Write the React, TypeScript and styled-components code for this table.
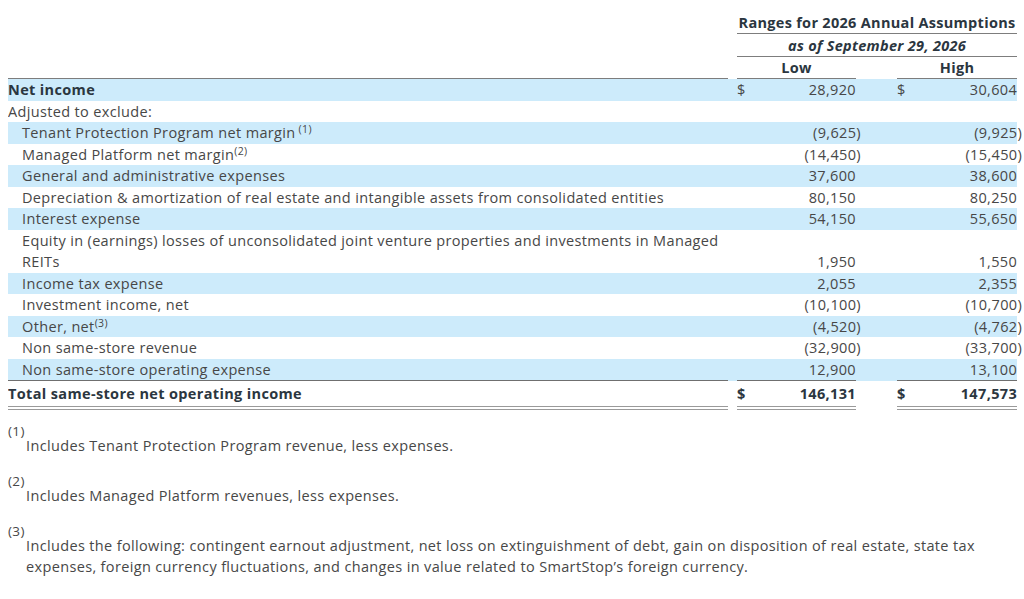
import React from "react";
import styled, { createGlobalStyle } from "styled-components";

const GlobalStyle = createGlobalStyle`
  body {
    margin: 8px 0 8px 8px;
    background: #fff;
    font-family: "Open Sans", "Liberation Sans", sans-serif;
    color: #474747;
  }
`;

const Table = styled.table`
  width: 1009px;
  margin-top: 3px;
  table-layout: fixed;
  border-collapse: collapse;
  font-size: 14.5px;
  letter-spacing: 0.35px;
`;

const HeadCell = styled.th<{ $line?: boolean; $italic?: boolean; $h?: number }>`
  padding: 0;
  height: ${(p) => p.$h ?? 22}px;
  font-weight: 700;
  font-style: ${(p) => (p.$italic ? "italic" : "normal")};
  text-align: center;
  color: #2b3640;
  font-size: 14.5px;
  letter-spacing: 0.3px;
  border-bottom: ${(p) => (p.$line ? "1.5px solid #7d7d7d" : "none")};
`;

const Row = styled.tr<{ $shade?: boolean }>`
  background: ${(p) => (p.$shade ? "#cdebfb" : "transparent")};
`;

const Label = styled.td<{ $indent?: boolean; $bold?: boolean }>`
  padding: 0 0 0 ${(p) => (p.$indent ? "14px" : "0")};
  line-height: 21.5px;
  font-weight: ${(p) => (p.$bold ? 700 : 400)};
  color: ${(p) => (p.$bold ? "#2b3640" : "#474747")};
  white-space: nowrap;
`;

const Cell = styled.td<{ $bold?: boolean; $right?: boolean }>`
  padding: 0;
  line-height: 21.5px;
  vertical-align: bottom;
  text-align: ${(p) => (p.$right ? "right" : "left")};
  font-weight: ${(p) => (p.$bold ? 700 : 400)};
  color: ${(p) => (p.$bold ? "#2b3640" : "#474747")};
`;

const TotalRow = styled.tr`
  td {
    height: 24px;
    padding-top: 1px;
    line-height: 24px;
    vertical-align: middle;
  }
  td.ruled {
    border-top: 1.5px solid #6f6f6f;
    border-bottom: 4px double #9a9a9a;
  }
`;

const Paren = styled.span`
  margin-right: -5px;
`;

const Sup = styled.sup<{ $space?: boolean }>`
  font-size: 10.5px;
  line-height: 0;
  vertical-align: 5px;
  margin-left: ${(p) => (p.$space ? "3px" : "0")};
`;

const Notes = styled.div`
  margin-top: 18px;
  display: flex;
  flex-direction: column;
  gap: 22px;
`;

const Note = styled.div`
  font-size: 14.5px;
  letter-spacing: 0.35px;
`;

const NoteMark = styled.div`
  font-size: 13.5px;
  line-height: 7px;
`;

const NoteText = styled.div`
  padding-left: 18px;
  line-height: 21px;
  max-width: 960px;
`;

type Line = {
  label: React.ReactNode;
  low: string;
  high: string;
  shade?: boolean;
};

const lines: Line[] = [
  {
    label: (
      <>
        Tenant Protection Program net margin<Sup $space>(1)</Sup>
      </>
    ),
    low: "(9,625)",
    high: "(9,925)",
    shade: true,
  },
  {
    label: (
      <>
        Managed Platform net margin<Sup>(2)</Sup>
      </>
    ),
    low: "(14,450)",
    high: "(15,450)",
  },
  { label: "General and administrative expenses", low: "37,600", high: "38,600", shade: true },
  {
    label: "Depreciation & amortization of real estate and intangible assets from consolidated entities",
    low: "80,150",
    high: "80,250",
  },
  { label: "Interest expense", low: "54,150", high: "55,650", shade: true },
  {
    label: (
      <>
        Equity in (earnings) losses of unconsolidated joint venture properties and investments in Managed
        <br />
        REITs
      </>
    ),
    low: "1,950",
    high: "1,550",
  },
  { label: "Income tax expense", low: "2,055", high: "2,355", shade: true },
  { label: "Investment income, net", low: "(10,100)", high: "(10,700)" },
  {
    label: (
      <>
        Other, net<Sup>(3)</Sup>
      </>
    ),
    low: "(4,520)",
    high: "(4,762)",
    shade: true,
  },
  { label: "Non same-store revenue", low: "(32,900)", high: "(33,700)" },
  { label: "Non same-store operating expense", low: "12,900", high: "13,100", shade: true },
];

function Amount({ value }: { value: string }) {
  if (value.startsWith("(")) {
    return (
      <>
        {value.slice(0, -1)}
        <Paren>)</Paren>
      </>
    );
  }
  return <>{value}</>;
}

const notes = [
  "Includes Tenant Protection Program revenue, less expenses.",
  "Includes Managed Platform revenues, less expenses.",
  "Includes the following: contingent earnout adjustment, net loss on extinguishment of debt, gain on disposition of real estate, state tax expenses, foreign currency fluctuations, and changes in value related to SmartStop\u2019s foreign currency.",
];

export default function App() {
  return (
    <>
      <GlobalStyle />
      <Table>
        <colgroup>
          <col style={{ width: 720 }} />
          <col style={{ width: 9 }} />
          <col style={{ width: 20 }} />
          <col style={{ width: 99 }} />
          <col style={{ width: 41 }} />
          <col style={{ width: 20 }} />
          <col style={{ width: 100 }} />
        </colgroup>
        <thead>
          <tr>
            <HeadCell />
            <HeadCell />
            <HeadCell colSpan={5} $line>
              Ranges for 2026 Annual Assumptions
            </HeadCell>
          </tr>
          <tr>
            <HeadCell />
            <HeadCell />
            <HeadCell colSpan={5} $line $italic>
              as of September 29, 2026
            </HeadCell>
          </tr>
          <tr>
            <HeadCell $line $h={21} />
            <HeadCell $h={21} />
            <HeadCell colSpan={2} $line $h={21}>
              Low
            </HeadCell>
            <HeadCell $h={21} />
            <HeadCell colSpan={2} $line $h={21}>
              High
            </HeadCell>
          </tr>
        </thead>
        <tbody>
          <Row $shade>
            <Label $bold>Net income</Label>
            <Cell />
            <Cell>$</Cell>
            <Cell $right>28,920</Cell>
            <Cell />
            <Cell>$</Cell>
            <Cell $right>30,604</Cell>
          </Row>
          <Row>
            <Label colSpan={7}>Adjusted to exclude:</Label>
          </Row>
          {lines.map((l, i) => (
            <Row key={i} $shade={l.shade}>
              <Label $indent>{l.label}</Label>
              <Cell />
              <Cell />
              <Cell $right>
                <Amount value={l.low} />
              </Cell>
              <Cell />
              <Cell />
              <Cell $right>
                <Amount value={l.high} />
              </Cell>
            </Row>
          ))}
          <TotalRow>
            <Label className="ruled" $bold>
              Total same-store net operating income
            </Label>
            <Cell />
            <Cell className="ruled" $bold>
              $
            </Cell>
            <Cell className="ruled" $bold $right>
              146,131
            </Cell>
            <Cell />
            <Cell className="ruled" $bold>
              $
            </Cell>
            <Cell className="ruled" $bold $right>
              147,573
            </Cell>
          </TotalRow>
        </tbody>
      </Table>
      <Notes>
        {notes.map((n, i) => (
          <Note key={i}>
            <NoteMark>({i + 1})</NoteMark>
            <NoteText>{n}</NoteText>
          </Note>
        ))}
      </Notes>
    </>
  );
}
